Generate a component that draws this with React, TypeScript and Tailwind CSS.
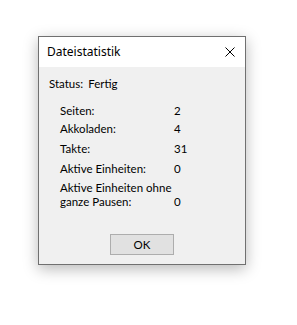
const rows = [
  { label: 'Seiten:', value: '2', mt: 'mt-[11px]' },
  { label: 'Akkoladen:', value: '4', mt: 'mt-[2px]' },
  { label: 'Takte:', value: '31', mt: 'mt-[4px]' },
  { label: 'Aktive Einheiten:', value: '0', mt: 'mt-[4px]' }
];

const CloseIcon = () => (
  <svg width="10" height="10" viewBox="0 0 10 10" className="block">
    <path d="M0.5 0.5 L9.5 9.5 M9.5 0.5 L0.5 9.5" stroke="#000" strokeWidth="1" fill="none" />
  </svg>
);

export default function App() {
  return (
    <div className="min-h-[325px] w-[297px] bg-white pl-[38px] pt-[36px] font-['Lato',sans-serif] text-[11.5px] text-black">
      <div className="flex w-[208px] flex-col border border-[#707070] bg-[#f0f0f0] shadow-[0_4px_14px_rgba(0,0,0,0.28)]">
        {/* title bar */}
        <div className="flex h-[30px] items-center justify-between bg-white pl-[8px] pr-[10px]">
          <span className="font-['Noto_Sans',sans-serif] text-[12px] leading-[16px]">Dateistatistik</span>
          <CloseIcon />
        </div>

        <div className="flex flex-col pb-[9px] pt-[9px]">
          <div className="flex gap-[5px] pl-[10px] leading-[16px]">
            <span>Status:</span>
            <span>Fertig</span>
          </div>

          <div className="flex flex-col pl-[21px]">
            {rows.map(row => (
              <div key={row.label} className={`flex leading-[16px] ${row.mt}`}>
                <span className="w-[114px] shrink-0 whitespace-nowrap">{row.label}</span>
                <span>{row.value}</span>
              </div>
            ))}
            <div className="mt-[4px] flex items-end leading-[14px]">
              <span className="w-[114px] shrink-0 whitespace-nowrap">
                Aktive Einheiten ohne
                <br />
                ganze Pausen:
              </span>
              <span>0</span>
            </div>
          </div>

          <div className="mt-[25px] flex justify-center">
            <button className="h-[21px] w-[64px] border border-[#adadad] bg-[#e1e1e1] leading-[16px]">OK</button>
          </div>
        </div>
      </div>
    </div>
  );
}
